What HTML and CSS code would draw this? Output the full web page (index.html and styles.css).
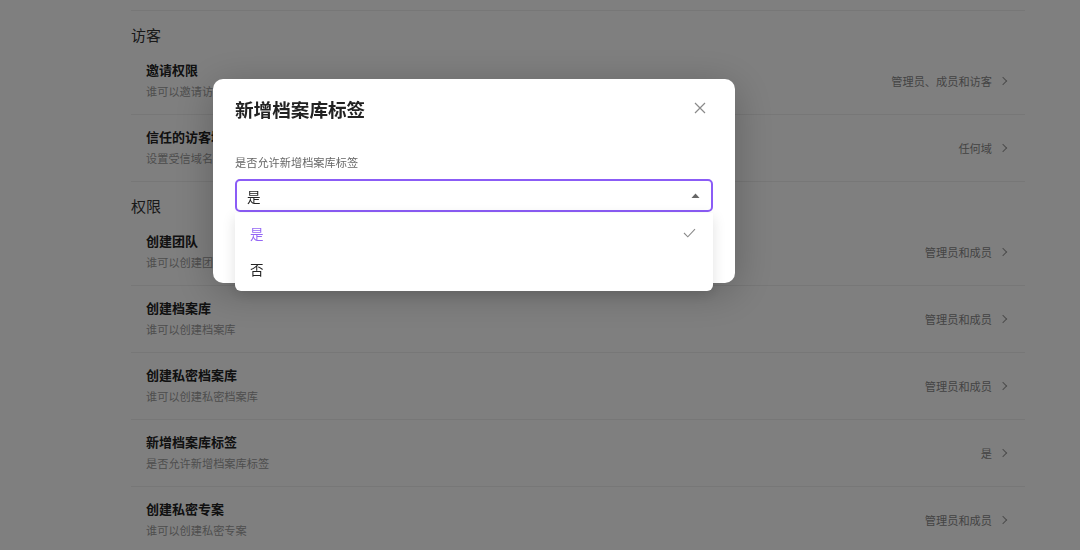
FILE: index.html
```html
<!DOCTYPE html>
<html lang="zh">
<head>
<meta charset="utf-8">
<link rel="stylesheet" href="styles.css">
</head>
<body>
<div class="page">
  <div class="settings">
    <div class="section-title">访客</div>
    <div class="row">
      <div class="row-text"><div class="row-title">邀请权限</div><div class="row-sub">谁可以邀请访客</div></div>
      <div class="row-value">管理员、成员和访客<span class="chev"></span></div>
    </div>
    <div class="row">
      <div class="row-text"><div class="row-title">信任的访客域名</div><div class="row-sub">设置受信域名</div></div>
      <div class="row-value">任何域<span class="chev"></span></div>
    </div>
    <div class="section-title">权限</div>
    <div class="row">
      <div class="row-text"><div class="row-title">创建团队</div><div class="row-sub">谁可以创建团队</div></div>
      <div class="row-value">管理员和成员<span class="chev"></span></div>
    </div>
    <div class="row">
      <div class="row-text"><div class="row-title">创建档案库</div><div class="row-sub">谁可以创建档案库</div></div>
      <div class="row-value">管理员和成员<span class="chev"></span></div>
    </div>
    <div class="row">
      <div class="row-text"><div class="row-title">创建私密档案库</div><div class="row-sub">谁可以创建私密档案库</div></div>
      <div class="row-value">管理员和成员<span class="chev"></span></div>
    </div>
    <div class="row">
      <div class="row-text"><div class="row-title">新增档案库标签</div><div class="row-sub">是否允许新增档案库标签</div></div>
      <div class="row-value">是<span class="chev"></span></div>
    </div>
    <div class="row">
      <div class="row-text"><div class="row-title">创建私密专案</div><div class="row-sub">谁可以创建私密专案</div></div>
      <div class="row-value">管理员和成员<span class="chev"></span></div>
    </div>
  </div>
</div>

<div class="overlay"></div>

<div class="modal">
  <div class="modal-head">
    <div class="modal-title">新增档案库标签</div>
    <svg class="close" width="12" height="12" viewBox="0 0 12 12"><path d="M1 1L11 11M11 1L1 11" stroke="#8a8a8a" stroke-width="1.2" fill="none"/></svg>
  </div>
  <div class="field-label">是否允许新增档案库标签</div>
  <div class="select-wrap">
    <div class="select">
      <span>是</span>
      <svg class="caret" width="9" height="5" viewBox="0 0 9 5"><path d="M0.5 5L4.5 0.5L8.5 5Z" fill="#666"/></svg>
    </div>
    <div class="dropdown">
      <div class="option selected"><span>是</span>
        <svg width="13" height="10" viewBox="0 0 13 10"><path d="M1 5L4.8 8.8L12 1.2" stroke="#8a8a8a" stroke-width="1.1" fill="none"/></svg>
      </div>
      <div class="option"><span>否</span></div>
    </div>
  </div>
</div>
</body>
</html>
```
FILE: styles.css
```css
* { box-sizing: border-box; }
body {
  margin: 0;
  background: #fff;
  font-family: "Noto Sans CJK SC", "Noto Sans", sans-serif;
  color: #222;
  overflow: hidden;
  height: 550px;
}
.page {
  padding: 10px 55px 0 131px;
}
.settings {
  width: 894px;
  border-top: 1px solid #eee;
}
.section-title {
  height: 37px;
  padding-top: 14px;
  font-size: 15px;
  line-height: 20px;
  color: #333;
}
.row {
  display: flex;
  align-items: center;
  justify-content: space-between;
  height: 67px;
  padding: 0 17px 0 15px;
  border-bottom: 1px solid #eee;
}
.row-text {
  padding-bottom: 2px;
}
.row-title {
  font-size: 13px;
  line-height: 18px;
  font-weight: 700;
  color: #222;
}
.row-sub {
  margin-top: 4px;
  font-size: 11.2px;
  line-height: 17px;
  color: #9c9c9c;
}
.row-value {
  display: flex;
  align-items: center;
  font-size: 11.2px;
  color: #888;
}
.chev {
  width: 6px;
  height: 6px;
  margin-left: 8px;
  margin-right: 2px;
  border-top: 1.2px solid #999;
  border-right: 1.2px solid #999;
  transform: rotate(45deg);
}
.overlay {
  position: fixed;
  inset: 0;
  background: rgba(0, 0, 0, 0.5);
}
.modal {
  position: fixed;
  left: 213px;
  top: 79px;
  width: 522px;
  height: 204px;
  background: #fff;
  border-radius: 10px;
  padding: 0 22px;
  box-shadow: 0 8px 40px rgba(0, 0, 0, 0.25);
}
.modal-head {
  display: flex;
  align-items: center;
  justify-content: space-between;
  height: 58px;
  padding-right: 7px;
}
.modal-title {
  font-size: 18.6px;
  font-weight: 700;
  color: #222;
}
.field-label {
  margin-top: 16px;
  font-size: 11.2px;
  line-height: 18px;
  color: #666;
}
.select-wrap {
  position: relative;
  margin-top: 8px;
  width: 478px;
}
.select {
  display: flex;
  align-items: center;
  justify-content: space-between;
  height: 33px;
  padding: 0 11px 0 10px;
  border: 2px solid #8b5cf6;
  border-radius: 5px;
  font-size: 13.5px;
  color: #222;
}
.dropdown {
  position: absolute;
  left: 0;
  top: 34px;
  width: 478px;
  padding: 2px 0 4px;
  background: #fff;
  border-radius: 0 0 6px 6px;
  box-shadow: 0 4px 14px rgba(0, 0, 0, 0.12);
}
.option {
  display: flex;
  align-items: center;
  justify-content: space-between;
  height: 36px;
  padding: 0 17px 0 15px;
  font-size: 13.5px;
  color: #222;
}
.option.selected {
  color: #9466f5;
}
```
